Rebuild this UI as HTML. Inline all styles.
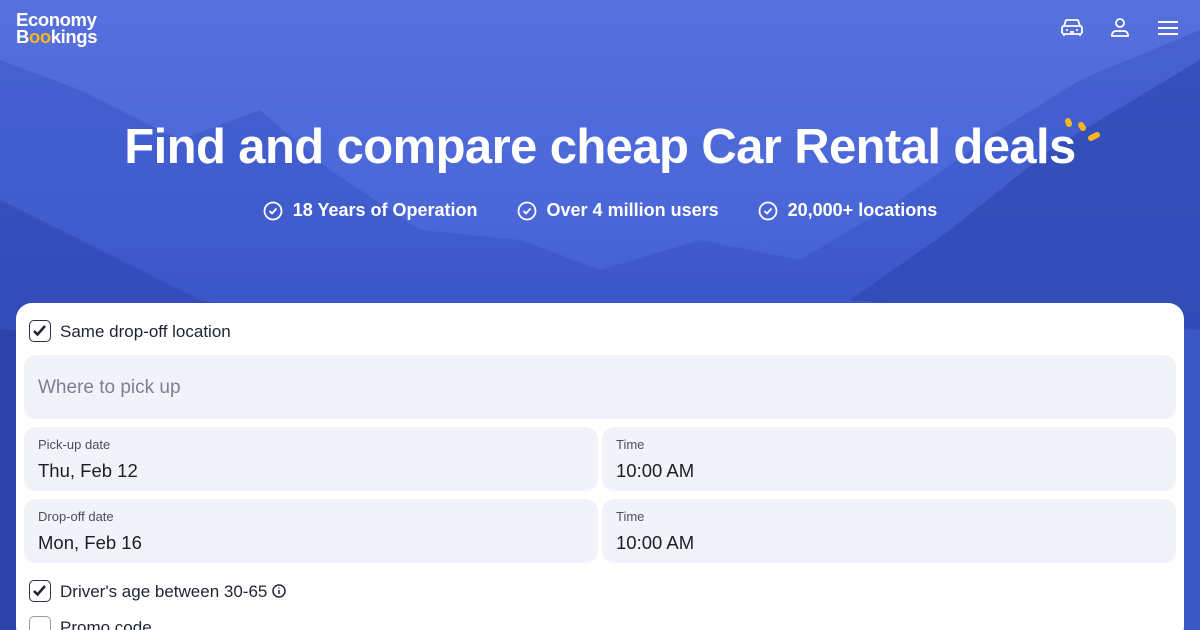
<!DOCTYPE html>
<html><head><meta charset="utf-8"><style>
*{box-sizing:border-box;margin:0;padding:0}
html,body{width:1200px;height:630px;overflow:hidden}
body{font-family:"Liberation Sans",sans-serif;position:relative;background:#3f5bd3}
.bg{position:absolute;inset:0;background:linear-gradient(180deg,#5670dc 0%,#4a66d8 35%,#3b55c8 60%,#3049b5 100%)}
svg.m{position:absolute;left:0;top:0}
.logo{position:absolute;left:16px;top:11px;color:#fff;font-weight:bold;font-size:18.5px;line-height:17px;letter-spacing:-0.4px}
.logo span{color:#f7b51e}
h1{position:absolute;left:0;width:1200px;top:119px;text-align:center;color:#fff;font-size:49px;font-weight:bold;letter-spacing:-0.6px}
.feat{position:absolute;top:200px;left:0;width:1200px;text-align:center;color:#fff;font-size:18px;font-weight:bold}
.feat span{margin:0 17px;display:inline-flex;align-items:center;gap:10px}
.card{position:absolute;left:16px;top:303px;width:1168px;height:340px;background:#fff;border-radius:16px}
.cb{position:absolute;width:22px;height:22px;border:1.5px solid #2a2f45;border-radius:5px}
.lbl{position:absolute;font-size:17px;color:#1f2335}
.f{position:absolute;background:#f1f3f8;border-radius:12px}
.f small{position:absolute;left:14px;top:10px;font-size:13px;color:#4a4f63}
.f b{position:absolute;left:14px;top:33px;font-size:18.5px;font-weight:normal;color:#1a1d2b}
</style></head><body>
<div class="bg"></div>
<svg class="m" width="1200" height="630">
<polygon points="0,60 80,90 180,140 260,110 330,170 420,230 520,240 600,270 700,240 800,260 900,200 1000,130 1080,80 1200,30 1200,630 0,630" fill="#3550c2" opacity=".45"/>
<polygon points="0,200 100,250 200,300 300,320 0,330" fill="#2a42aa" opacity=".5"/>
<polygon points="850,300 950,230 1050,150 1200,60 1200,330" fill="#2c45ae" opacity=".6"/>
<polygon points="0,330 16,330 16,630 0,630" fill="#2a42aa"/>
<polygon points="1184,330 1200,330 1200,630 1184,630" fill="#3b58c6"/>
</svg>
<div class="logo">Economy<br>B<span>oo</span>kings</div>
<svg style="position:absolute;left:1060px;top:18px" width="24" height="20" viewBox="0 0 24 20" fill="none" stroke="#fff" stroke-width="1.8" stroke-linejoin="round"><path d="M4 8l2-6h12l2 6"/><rect x="2" y="8" width="20" height="8" rx="2"/><path d="M4 16v2M20 16v2M6 12h2M16 12h2M10 14h4"/></svg>
<svg style="position:absolute;left:1110px;top:17px" width="20" height="20" viewBox="0 0 20 20" fill="none" stroke="#fff" stroke-width="1.8"><circle cx="10" cy="6" r="4"/><path d="M2 19v-1a4 4 0 0 1 4-4h8a4 4 0 0 1 4 4v1z"/></svg>
<svg style="position:absolute;left:1158px;top:20px" width="20" height="16" stroke="#fff" stroke-width="2"><path d="M0 2h20M0 8h20M0 14h20"/></svg>
<h1>Find and compare cheap Car Rental deals</h1>
<svg style="position:absolute;left:1060px;top:114px" width="44" height="34" stroke="#f7b51e" stroke-width="6" stroke-linecap="round"><path d="M8 7l1 3M21 11l2 3M31 24l6-3"/></svg>
<div class="feat">
<span><svg width="20" height="20" fill="none" stroke="#fff" stroke-width="1.8"><circle cx="10" cy="10" r="8.5"/><path d="M6.5 10l2.5 2.5 4.5-5"/></svg>18 Years of Operation</span>
<span><svg width="20" height="20" fill="none" stroke="#fff" stroke-width="1.8"><circle cx="10" cy="10" r="8.5"/><path d="M6.5 10l2.5 2.5 4.5-5"/></svg>Over 4 million users</span>
<span><svg width="20" height="20" fill="none" stroke="#fff" stroke-width="1.8"><circle cx="10" cy="10" r="8.5"/><path d="M6.5 10l2.5 2.5 4.5-5"/></svg>20,000+ locations</span>
</div>
<div class="card">
<div class="cb" style="left:13px;top:17px"><svg width="19" height="19" fill="none" stroke="#1f2335" stroke-width="2.5"><path d="M4 10l3.5 3.5L15 5"/></svg></div>
<div class="lbl" style="left:44px;top:19px">Same drop-off location</div>
<div class="f" style="left:8px;top:52px;width:1152px;height:64px"><span style="position:absolute;left:14px;top:22px;font-size:19px;color:#7b8094">Where to pick up</span></div>
<div class="f" style="left:8px;top:124px;width:574px;height:64px"><small>Pick-up date</small><b>Thu, Feb 12</b></div>
<div class="f" style="left:586px;top:124px;width:574px;height:64px"><small>Time</small><b>10:00 AM</b></div>
<div class="f" style="left:8px;top:196px;width:574px;height:64px"><small>Drop-off date</small><b>Mon, Feb 16</b></div>
<div class="f" style="left:586px;top:196px;width:574px;height:64px"><small>Time</small><b>10:00 AM</b></div>
<div class="cb" style="left:13px;top:277px"><svg width="19" height="19" fill="none" stroke="#1f2335" stroke-width="2.5"><path d="M4 10l3.5 3.5L15 5"/></svg></div>
<div class="lbl" style="left:44px;top:279px">Driver's age between 30-65 <svg width="14" height="14" style="vertical-align:-1px" fill="none" stroke="#1f2335" stroke-width="1.5"><circle cx="7" cy="7" r="6"/><path d="M7 6v4M7 3.5v1"/></svg></div>
<div class="cb" style="left:13px;top:313px;border-color:#999"></div>
<div class="lbl" style="left:44px;top:315px">Promo code</div>
</div>
</body></html>
